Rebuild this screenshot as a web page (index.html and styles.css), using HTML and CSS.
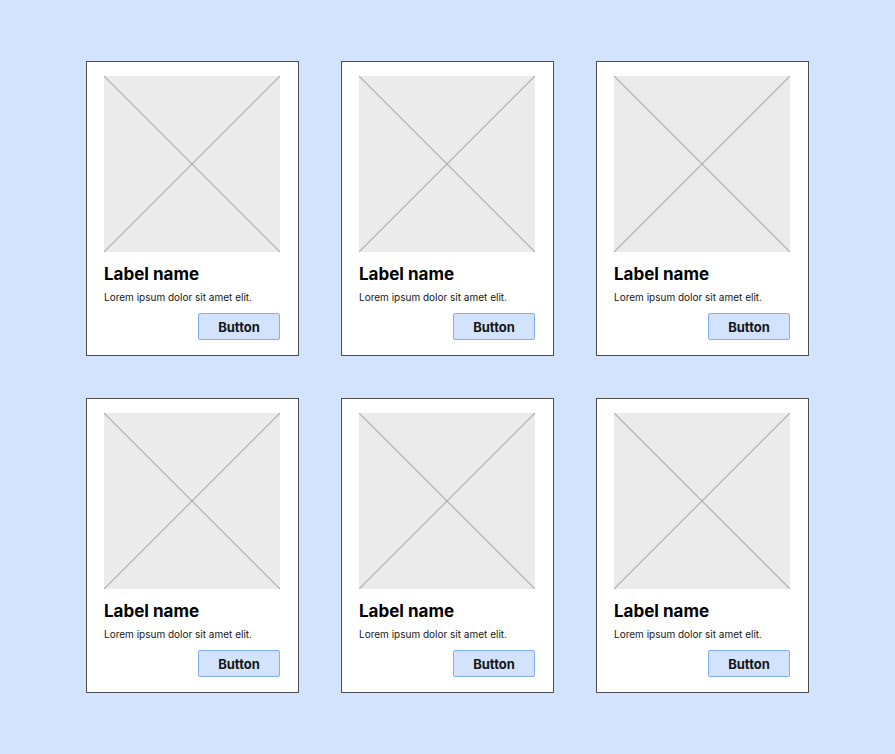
FILE: index.html
```html
<!DOCTYPE html>
<html lang="en">
<head>
<meta charset="utf-8">
<title>Cards</title>
<link rel="stylesheet" href="styles.css">
</head>
<body>
<main class="grid">
  <article class="card">
    <div class="thumb"><svg viewBox="0 0 176 176" preserveAspectRatio="none"><line x1="0" y1="0" x2="176" y2="176"/><line x1="176" y1="0" x2="0" y2="176"/></svg></div>
    <h2 class="title">Label name</h2>
    <p class="text">Lorem ipsum dolor sit amet elit.</p>
    <div class="actions"><button class="btn">Button</button></div>
  </article>
  <article class="card">
    <div class="thumb"><svg viewBox="0 0 176 176" preserveAspectRatio="none"><line x1="0" y1="0" x2="176" y2="176"/><line x1="176" y1="0" x2="0" y2="176"/></svg></div>
    <h2 class="title">Label name</h2>
    <p class="text">Lorem ipsum dolor sit amet elit.</p>
    <div class="actions"><button class="btn">Button</button></div>
  </article>
  <article class="card">
    <div class="thumb"><svg viewBox="0 0 176 176" preserveAspectRatio="none"><line x1="0" y1="0" x2="176" y2="176"/><line x1="176" y1="0" x2="0" y2="176"/></svg></div>
    <h2 class="title">Label name</h2>
    <p class="text">Lorem ipsum dolor sit amet elit.</p>
    <div class="actions"><button class="btn">Button</button></div>
  </article>
  <article class="card">
    <div class="thumb"><svg viewBox="0 0 176 176" preserveAspectRatio="none"><line x1="0" y1="0" x2="176" y2="176"/><line x1="176" y1="0" x2="0" y2="176"/></svg></div>
    <h2 class="title">Label name</h2>
    <p class="text">Lorem ipsum dolor sit amet elit.</p>
    <div class="actions"><button class="btn">Button</button></div>
  </article>
  <article class="card">
    <div class="thumb"><svg viewBox="0 0 176 176" preserveAspectRatio="none"><line x1="0" y1="0" x2="176" y2="176"/><line x1="176" y1="0" x2="0" y2="176"/></svg></div>
    <h2 class="title">Label name</h2>
    <p class="text">Lorem ipsum dolor sit amet elit.</p>
    <div class="actions"><button class="btn">Button</button></div>
  </article>
  <article class="card">
    <div class="thumb"><svg viewBox="0 0 176 176" preserveAspectRatio="none"><line x1="0" y1="0" x2="176" y2="176"/><line x1="176" y1="0" x2="0" y2="176"/></svg></div>
    <h2 class="title">Label name</h2>
    <p class="text">Lorem ipsum dolor sit amet elit.</p>
    <div class="actions"><button class="btn">Button</button></div>
  </article>
</main>
</body>
</html>
```
FILE: styles.css
```css
html, body {
  margin: 0;
  padding: 0;
}
body {
  background: #d3e3fd;
  font-family: Inter, "Noto Sans", sans-serif;
  color: #161616;
  width: 895px;
  height: 754px;
  display: flex;
  align-items: center;
  justify-content: center;
}
.grid {
  display: grid;
  grid-template-columns: repeat(3, 213px);
  column-gap: 42px;
  row-gap: 42px;
}
.card {
  box-sizing: border-box;
  width: 213px;
  height: 295px;
  background: #fff;
  border: 1px solid #4d4d4d;
  padding: 14px 18px 15px 17px;
  display: flex;
  flex-direction: column;
}
.thumb {
  width: 176px;
  height: 176px;
  background: #ebebeb;
}
.thumb svg {
  display: block;
  width: 176px;
  height: 176px;
}
.thumb line {
  stroke: #ababab;
  stroke-width: 1.1;
}
.title {
  margin: 11px 0 0;
  font-size: 17px;
  line-height: 22px;
  font-weight: 700;
  color: #000;
}
.text {
  margin: 5px 0 0;
  font-size: 10px;
  line-height: 14px;
  color: #161616;
}
.actions {
  margin-top: auto;
  display: flex;
  justify-content: flex-end;
}
.btn {
  box-sizing: border-box;
  width: 82px;
  height: 27px;
  background: #d3e3fd;
  border: 1px solid #7fadf7;
  border-radius: 2px;
  font-family: Inter, "Noto Sans", sans-serif;
  font-size: 13px;
  font-weight: 700;
  color: #161616;
  padding: 1px 0 0;
}
```
